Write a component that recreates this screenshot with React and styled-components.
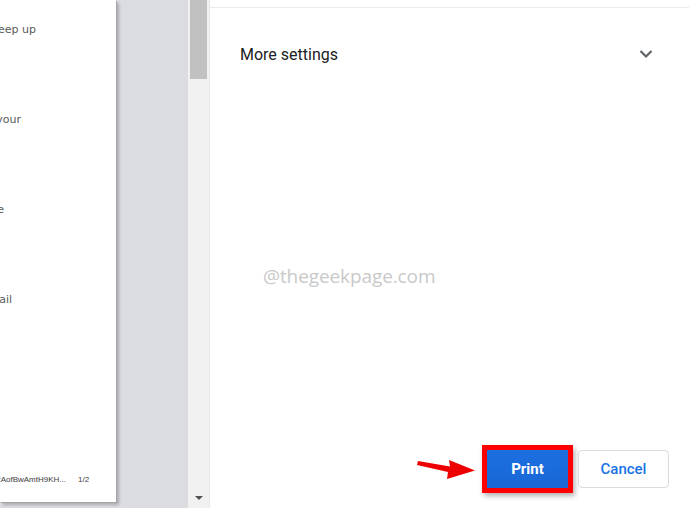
import React from 'react';
import styled, { createGlobalStyle } from 'styled-components';

const Global = createGlobalStyle`
  html, body { margin: 0; padding: 0; background: #fff; }
  #root { height: 508px; overflow: hidden; }
`;

const Layout = styled.div`
  display: flex;
  height: 508px;
  width: 689px;
  overflow: hidden;
`;

const Preview = styled.div`
  width: 188px;
  flex-shrink: 0;
  background: #dadce0;
`;

const Page = styled.div`
  width: 116px;
  height: 502px;
  background: #fff;
  box-shadow: 1px 1px 0 #a4a4a4, 3px 3px 3px rgba(0, 0, 0, 0.22);
  overflow: hidden;
  display: flex;
  flex-direction: column;
  font-family: Verdana, 'DejaVu Sans', sans-serif;
  color: #5a5a5a;
`;

const Lines = styled.div`
  display: flex;
  flex-direction: column;
  gap: 76px;
  padding-top: 23px;
  flex: 1;
`;

const Line = styled.div`
  display: flex;
  justify-content: flex-end;
  width: ${p => p.$end}px;
  white-space: nowrap;
  font-size: 11px;
  line-height: 14px;
`;

const Footer = styled.div`
  display: flex;
  align-items: center;
  gap: 12px;
  height: 16px;
  margin-bottom: 15px;
  font-family: 'Liberation Sans', Arial, sans-serif;
  font-size: 8px;
  color: #3c3c3c;
`;

const FooterName = styled.div`
  display: flex;
  justify-content: flex-end;
  width: 66px;
  white-space: nowrap;
`;

const Scrollbar = styled.div`
  width: 21px;
  flex-shrink: 0;
  background: #f1f1f1;
  border-right: 1px solid #e6e6e6;
  display: flex;
  flex-direction: column;
  align-items: center;
`;

const Thumb = styled.div`
  width: 17px;
  height: 79px;
  background: #c1c1c1;
`;

const ArrowDown = styled.div`
  margin-top: auto;
  margin-bottom: 8px;
  width: 0;
  height: 0;
  border-left: 4px solid transparent;
  border-right: 4px solid transparent;
  border-top: 4px solid #505050;
`;

const Sidebar = styled.div`
  flex: 1;
  display: flex;
  flex-direction: column;
  font-family: Roboto, 'Liberation Sans', sans-serif;
`;

const TopRule = styled.div`
  margin-top: 7px;
  border-top: 1px solid #e8eaed;
`;

const SettingsRow = styled.div`
  display: flex;
  align-items: center;
  justify-content: space-between;
  height: 46px;
  padding: 23px 36px 0 30px;
  font-size: 16px;
  color: #202124;
`;

const Watermark = styled.div`
  margin: 186px 0 0 53px;
  font-family: 'Open Sans', 'DejaVu Sans', sans-serif;
  font-size: 19px;
  color: #c9c9c9;
  letter-spacing: -0.1px;
`;

const Actions = styled.div`
  margin-top: auto;
  display: flex;
  align-items: center;
  justify-content: flex-end;
  gap: 5px;
  padding: 0 20px 15px 0;
`;

const Highlight = styled.div`
  border: 5px solid #ff0000;
  box-shadow: 2px 3px 5px rgba(0, 0, 0, 0.3);
`;

const Button = styled.button`
  width: ${p => (p.$primary ? 81 : 91)}px;
  height: 38px;
  border-radius: ${p => (p.$primary ? 0 : 4)}px;
  border: ${p => (p.$primary ? 'none' : '1px solid #dadce0')};
  background: ${p => (p.$primary ? 'linear-gradient(#1b6fe0, #1a67d6)' : '#fff')};
  color: ${p => (p.$primary ? '#fff' : '#1a73e8')};
  font-family: Roboto, 'Liberation Sans', sans-serif;
  font-weight: ${p => (p.$primary ? 700 : 500)};
  font-size: 15px;
  display: flex;
  align-items: center;
  justify-content: center;
  padding: 0;
`;

const RedArrow = () => (
  <svg width="60" height="22" viewBox="0 0 60 22">
    <polygon points="1,3 33,8.5 32,2 58,12.5 30,21 31,14 0,7" fill="#ee0000" />
  </svg>
);

const Chevron = () => (
  <svg width="14" height="10" viewBox="0 0 14 10">
    <path d="M1.5 2 L7 7.5 L12.5 2" fill="none" stroke="#5f6368" strokeWidth="2.2" />
  </svg>
);

export default function App() {
  return (
    <Layout>
      <Global />
      <Preview>
        <Page>
          <Lines>
            <Line $end={36}>to keep up</Line>
            <Line $end={21}>of your</Line>
            <Line $end={4}>the</Line>
            <Line $end={12}>email</Line>
          </Lines>
          <Footer>
            <FooterName>2Lm2AofBwAmtH9KH...</FooterName>
            <span>1/2</span>
          </Footer>
        </Page>
      </Preview>
      <Scrollbar>
        <Thumb />
        <ArrowDown />
      </Scrollbar>
      <Sidebar>
        <TopRule />
        <SettingsRow>
          <span>More settings</span>
          <Chevron />
        </SettingsRow>
        <Watermark>@thegeekpage.com</Watermark>
        <Actions>
          <RedArrow />
          <Highlight>
            <Button $primary>Print</Button>
          </Highlight>
          <Button>Cancel</Button>
        </Actions>
      </Sidebar>
    </Layout>
  );
}
